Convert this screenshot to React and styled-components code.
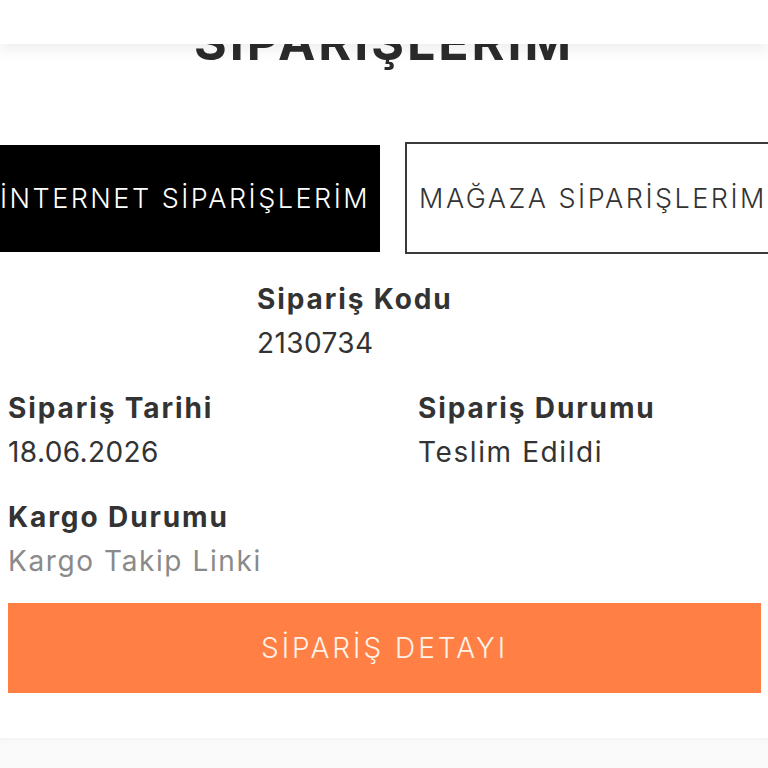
import React from "react";
import styled, { createGlobalStyle } from "styled-components";

const GlobalStyle = createGlobalStyle`
  html, body {
    margin: 0;
    padding: 0;
    background: #ffffff;
    overflow: hidden;
  }
  body {
    font-family: Inter, "Noto Sans", "DejaVu Sans", sans-serif;
    color: #333333;
  }
  * { box-sizing: border-box; }
`;

const TopBar = styled.header`
  position: fixed;
  top: 0;
  left: 0;
  right: 0;
  height: 44px;
  background: #ffffff;
  box-shadow: 0 6px 14px rgba(0, 0, 0, 0.07);
  z-index: 10;
`;

const Page = styled.main`
  width: 768px;
  min-height: 768px;
  overflow: hidden;
  display: flex;
  flex-direction: column;
`;

const Title = styled.h1`
  margin: 17px 0 0;
  height: 50px;
  font-size: 50px;
  line-height: 50px;
  font-weight: 700;
  letter-spacing: 3px;
  text-align: center;
  color: #2b2b2b;
`;

const TabRow = styled.nav`
  margin-top: 75px;
  margin-left: -10px;
  display: flex;
  align-items: center;
  gap: 25px;
  height: 112px;
`;

const Tab = styled.button`
  flex: 0 0 ${(p) => p.$width}px;
  height: ${(p) => (p.$active ? "107px" : "112px")};
  padding: 0;
  border: ${(p) => (p.$active ? "none" : "2px solid #3a3a3a")};
  background: ${(p) => (p.$active ? "#000000" : "#ffffff")};
  color: ${(p) => (p.$active ? "#ffffff" : "#333333")};
  font-family: inherit;
  font-size: 27px;
  font-weight: 300;
  letter-spacing: 2.5px;
  white-space: nowrap;
  display: flex;
  align-items: center;
  justify-content: center;
`;

const Details = styled.section`
  margin-top: 23px;
  padding: 0 8px;
  display: grid;
  grid-template-columns: 410px 1fr;
  row-gap: 21px;
`;

const Field = styled.div`
  display: flex;
  flex-direction: column;
  grid-column: ${(p) => (p.$wide ? "1 / -1" : "auto")};
  padding-left: ${(p) => p.$indent || 0}px;
`;

const Label = styled.span`
  font-size: 28px;
  line-height: 44px;
  font-weight: 700;
  letter-spacing: 1.9px;
  color: #333333;
`;

const Value = styled.span`
  font-size: 28px;
  line-height: 44px;
  font-weight: 400;
  letter-spacing: ${(p) => (p.$numeric ? "0.4px" : "1.6px")};
  color: ${(p) => (p.$muted ? "#8a8a8a" : "#333333")};
`;

const DetailButton = styled.button`
  margin: 20px 7px 0 8px;
  height: 90px;
  border: none;
  background: #ff7f45;
  color: #fff3ea;
  font-family: inherit;
  font-size: 28px;
  font-weight: 300;
  letter-spacing: 3px;
  display: flex;
  align-items: center;
  justify-content: center;
`;

const Footer = styled.footer`
  margin-top: 45px;
  flex: 1;
  background: #fafafa;
  box-shadow: inset 0 4px 6px -4px rgba(0, 0, 0, 0.05);
`;

export default function App() {
  return (
    <>
      <GlobalStyle />
      <TopBar />
      <Page>
        <Title>SİPARİŞLERİM</Title>
        <TabRow>
          <Tab $active $width={390}>İNTERNET SİPARİŞLERİM</Tab>
          <Tab $width={376}>MAĞAZA SİPARİŞLERİM</Tab>
        </TabRow>
        <Details>
          <Field $wide $indent={249}>
            <Label>Sipariş Kodu</Label>
            <Value $numeric>2130734</Value>
          </Field>
          <Field>
            <Label>Sipariş Tarihi</Label>
            <Value $numeric>18.06.2026</Value>
          </Field>
          <Field>
            <Label>Sipariş Durumu</Label>
            <Value>Teslim Edildi</Value>
          </Field>
          <Field $wide>
            <Label>Kargo Durumu</Label>
            <Value $muted>Kargo Takip Linki</Value>
          </Field>
        </Details>
        <DetailButton>SİPARİŞ DETAYI</DetailButton>
        <Footer />
      </Page>
    </>
  );
}
